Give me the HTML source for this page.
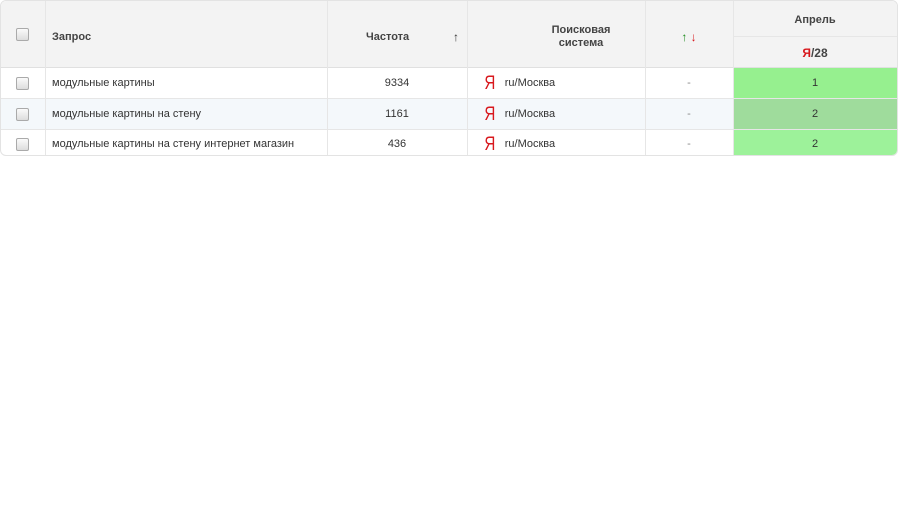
<!DOCTYPE html>
<html><head><style>
body{margin:0;width:898px;height:516px;background:#fff;font-family:"Liberation Sans","DejaVu Sans",sans-serif;color:#333;position:relative;overflow:hidden}
.t{position:absolute;left:0;top:0;width:896px;height:154px;border:1px solid #e3e3e3;border-radius:6px;overflow:hidden}
.c{position:absolute;box-sizing:border-box;font-size:11px;display:flex;align-items:center}
.r1{top:67px;height:30px}.r2{top:98px;height:30px}.r3{top:129px;height:28px}
.h{font-weight:bold;color:#444;font-size:11px}
.cb{width:11px;height:11px;border:1px solid #aaa;border-radius:2px;background:linear-gradient(#fafafa,#ddd)}
.vl{position:absolute;top:0;width:1px;height:154px;background:#e6e6e6}
.hl{position:absolute;left:0;width:896px;height:1px;background:#e6e6e6}
.ya{color:#d8181d;font-size:19px;font-family:"Liberation Sans",sans-serif;margin-right:8px;display:inline-block;transform:scaleX(.8);line-height:1}
</style></head><body>
<div class="t">
<div class="c" style="left:0;top:0;width:896px;height:66px;background:#f3f3f3"></div>
<div class="c" style="left:0;top:97px;width:896px;height:31px;background:#f4f8fb"></div>
<div class="c r1" style="left:732px;width:164px;background:#96f08f;justify-content:center">1</div>
<div class="c r2" style="left:732px;width:164px;background:#9fdc9c;justify-content:center">2</div>
<div class="c r3" style="left:732px;width:164px;background:#9df29a;justify-content:center">2</div>
<div class="hl" style="top:66px;background:#e0e0e0"></div>
<div class="hl" style="top:97px"></div>
<div class="hl" style="top:128px"></div>
<div class="hl" style="top:35px;left:732px;width:164px"></div>
<div class="vl" style="left:44px"></div><div class="vl" style="left:326px"></div><div class="vl" style="left:466px"></div><div class="vl" style="left:644px"></div><div class="vl" style="left:732px"></div>
<div class="c" style="left:15px;top:0;height:66px"><div class="cb"></div></div>
<div class="c r1" style="left:15px"><div class="cb"></div></div>
<div class="c r2" style="left:15px"><div class="cb"></div></div>
<div class="c r3" style="left:15px"><div class="cb"></div></div>
<div class="c h" style="left:51px;top:0;height:72px">Запрос</div>
<div class="c h" style="left:365px;top:0;height:72px">Частота</div>
<div class="c" style="left:452px;top:0;height:72px;font-size:12px">↑</div>
<div class="c h" style="left:520px;top:0;height:72px;width:120px;justify-content:center;text-align:center;line-height:13px">Поисковая<br>система</div>
<div class="c" style="left:644px;top:0;height:72px;width:88px;justify-content:center;font-size:12px;font-weight:bold"><span style="color:#1a8a1a">↑</span>&nbsp;<span style="color:#d8181d">↓</span></div>
<div class="c h" style="left:732px;top:0;height:38px;width:164px;justify-content:center">Апрель</div>
<div class="c h" style="left:732px;top:36px;height:31px;width:164px;justify-content:center;font-size:12px"><span style="color:#d8181d">Я</span>/28</div>
<div class="c r1" style="left:51px">модульные картины</div>
<div class="c r2" style="left:51px">модульные картины на стену</div>
<div class="c r3" style="left:51px">модульные картины на стену интернет магазин</div>
<div class="c r1" style="left:326px;width:140px;justify-content:center">9334</div>
<div class="c r2" style="left:326px;width:140px;justify-content:center">1161</div>
<div class="c r3" style="left:326px;width:140px;justify-content:center">436</div>
<div class="c r1" style="left:482px"><span class="ya">Я</span>ru/Москва</div>
<div class="c r2" style="left:482px"><span class="ya">Я</span>ru/Москва</div>
<div class="c r3" style="left:482px"><span class="ya">Я</span>ru/Москва</div>
<div class="c r1" style="left:644px;width:88px;justify-content:center;color:#888">-</div>
<div class="c r2" style="left:644px;width:88px;justify-content:center;color:#888">-</div>
<div class="c r3" style="left:644px;width:88px;justify-content:center;color:#888">-</div>
</div>
</body></html>
